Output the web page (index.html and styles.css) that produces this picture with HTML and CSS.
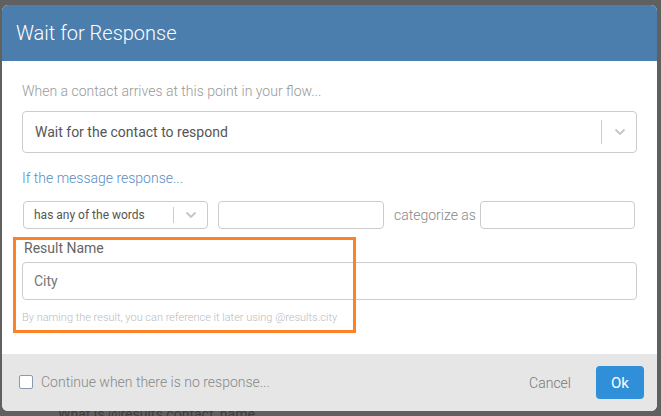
FILE: index.html
```html
<!DOCTYPE html>
<html>
<head>
<meta charset="utf-8">
<link rel="stylesheet" href="styles.css">
</head>
<body>
<div class="backdrop-text">What is @results.contact_name</div>
<div class="modal">
  <div class="header">Wait for Response</div>
  <div class="content">
    <div class="label">When a contact arrives at this point in your flow...</div>
    <div class="select big">
      <span class="select-value">Wait for the contact to respond</span>
      <span class="sep"></span>
      <svg class="chev" width="12" height="8" viewBox="0 0 12 8"><path d="M1.5 1.5 L6 6 L10.5 1.5" fill="none" stroke="#c4c4c4" stroke-width="1.8"/></svg>
    </div>
    <div class="label link">If the message response...</div>
    <div class="rule-row">
      <div class="select small">
        <span class="select-value">has any of the words</span>
        <span class="sep"></span>
        <svg class="chev" width="12" height="8" viewBox="0 0 12 8"><path d="M1.5 1.5 L6 6 L10.5 1.5" fill="none" stroke="#c4c4c4" stroke-width="1.8"/></svg>
      </div>
      <div class="input words"></div>
      <span class="cat">categorize as</span>
      <div class="input category"></div>
    </div>
    <div class="result">
      <div class="result-label">Result Name</div>
      <div class="input name">City</div>
      <div class="help">By naming the result, you can reference it later using @results.city</div>
      <div class="highlight"></div>
    </div>
  </div>
  <div class="footer">
    <label class="check"><span class="box"></span><span>Continue when there is no response...</span></label>
    <span class="cancel">Cancel</span>
    <span class="ok">Ok</span>
  </div>
</div>
</body>
</html>
```
FILE: styles.css
```css
* { box-sizing: border-box; }
html, body { margin: 0; padding: 0; }
body {
  width: 661px;
  height: 416px;
  background: #606060;
  font-family: Roboto, "Liberation Sans", sans-serif;
  overflow: hidden;
  position: relative;
  padding: 5px 0 0 2px;
}
.backdrop-text {
  position: absolute;
  left: 58px;
  top: 406px;
  color: #3c3c3c;
  font-size: 14px;
}
.modal {
  position: relative;
  width: 655px;
  height: 406px;
  background: #fff;
  border-radius: 6px;
  overflow: hidden;
  display: flex;
  flex-direction: column;
}
.header {
  height: 56px;
  background: #4b7dad;
  color: #fff;
  font-size: 20px;
  font-weight: 300;
  padding-left: 14px;
  display: flex;
  align-items: center;
}
.content {
  flex: 1;
  padding: 20px 20px 0 20px;
  position: relative;
}
.label {
  font-size: 14px;
  line-height: 20px;
  color: #999;
  font-weight: 300;
}
.label.link { color: #5b8cbf; margin-top: 15px; }
.select {
  border: 1px solid #ccc;
  border-radius: 4px;
  display: flex;
  align-items: center;
  color: #555;
  background: #fff;
}
.select.big {
  height: 42px;
  margin-top: 10px;
  padding-left: 12px;
  font-size: 14px;
}
.select-value { flex: 1; }
.sep { width: 1px; background: #ccc; align-self: center; }
.select.big .sep { height: 24px; }
.select.big .chev { margin: 0 10px 0 12px; }
.rule-row {
  display: flex;
  align-items: center;
  margin-top: 13px;
  height: 28px;
}
.select.small {
  width: 185px;
  height: 28px;
  padding-left: 10px;
  font-size: 12px;
  margin-left: 1px;
}
.select.small .sep { height: 16px; }
.select.small .chev { margin: 0 10px 0 11px; }
.input {
  border: 1px solid #ccc;
  border-radius: 4px;
  background: #fff;
}
.input.words { width: 166px; height: 28px; margin-left: 10px; }
.cat { font-size: 14px; color: #888; font-weight: 300; margin-left: 10px; width: 86px; }
.input.category { width: 155px; height: 28px; }
.result { position: relative; margin-top: 10px; }
.result-label { font-size: 14px; line-height: 18px; color: #666; padding-left: 2px; }
.input.name {
  height: 38px;
  margin-top: 5px;
  padding-left: 11px;
  display: flex;
  align-items: center;
  font-size: 14px;
  color: #777;
}
.help {
  font-size: 11px;
  color: #bbb;
  font-weight: 300;
  line-height: 16px;
  margin-top: 10px;
}
.highlight {
  position: absolute;
  left: -9px;
  top: -2px;
  width: 343px;
  height: 96px;
  border: 3px solid #fd8127;
}
.footer {
  height: 57px;
  background: #e6e6e6;
  display: flex;
  align-items: center;
  padding: 0 13px 0 17px;
  font-size: 14px;
}
.check {
  display: flex;
  align-items: center;
  color: #888;
  font-weight: 300;
  flex: 1;
  margin-top: -2px;
}
.box {
  width: 14px;
  height: 14px;
  border: 1px solid #8a9bb0;
  border-radius: 2px;
  background: #fff;
  margin-right: 8px;
}
.cancel { color: #777; font-weight: 300; margin-right: 25px; }
.ok {
  width: 48px;
  height: 33px;
  background: #2f8fd8;
  color: #fff;
  border-radius: 4px;
  display: flex;
  align-items: center;
  justify-content: center;
  font-size: 15px;
}
```
